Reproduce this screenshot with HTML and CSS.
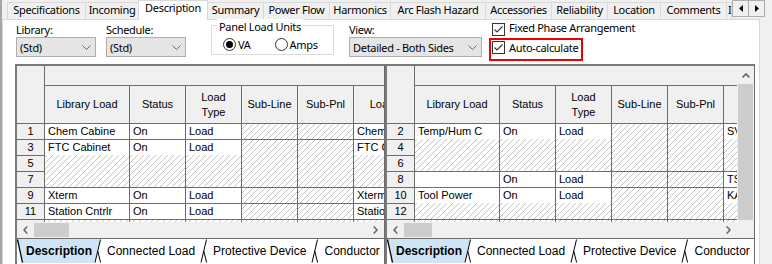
FILE: index.html
```html
<!DOCTYPE html>
<html>
<head>
<meta charset="utf-8">
<title>Panel Schedule</title>
<link rel="stylesheet" href="styles.css">
</head>
<body>
<div class="win">
  <div class="tabs">
    <div class="tab w-spec">Specifications</div>
    <div class="tab w-inc">Incoming</div>
    <div class="tab sel w-desc">Description</div>
    <div class="tab w-sum">Summary</div>
    <div class="tab w-pf">Power Flow</div>
    <div class="tab w-harm">Harmonics</div>
    <div class="tab w-arc">Arc Flash Hazard</div>
    <div class="tab w-acc">Accessories</div>
    <div class="tab w-rel">Reliability</div>
    <div class="tab w-loc">Location</div>
    <div class="tab w-com">Comments</div>
    <div class="tab w-part">Info</div>
    <div class="tab-arrows">
      <div class="arrow-btn"><svg width="4" height="7" viewBox="0 0 4 7"><polygon points="4,0 0,3.5 4,7" fill="#000"/></svg></div>
      <div class="arrow-btn"><svg width="4" height="7" viewBox="0 0 4 7"><polygon points="0,0 4,3.5 0,7" fill="#000"/></svg></div>
    </div>
  </div>
  <div class="panel">
    <div class="form">
      <div class="field f-lib">
        <div class="lbl">Library:</div>
        <div class="combo">(Std)<svg width="9" height="5" viewBox="0 0 9 5"><polyline points="0.5,0.5 4.5,4.5 8.5,0.5" fill="none" stroke="#666"/></svg></div>
      </div>
      <div class="field f-sch">
        <div class="lbl">Schedule:</div>
        <div class="combo">(Std)<svg width="9" height="5" viewBox="0 0 9 5"><polyline points="0.5,0.5 4.5,4.5 8.5,0.5" fill="none" stroke="#666"/></svg></div>
      </div>
      <div class="units">
        <div class="units-title">Panel Load Units</div>
        <div class="radios">
          <span class="radio on"></span><span class="rlbl va">VA</span>
          <span class="radio"></span><span class="rlbl">Amps</span>
        </div>
      </div>
      <div class="field f-view">
        <div class="lbl">View:</div>
        <div class="combo">Detailed - Both Sides<svg width="9" height="5" viewBox="0 0 9 5"><polyline points="0.5,0.5 4.5,4.5 8.5,0.5" fill="none" stroke="#666"/></svg></div>
      </div>
      <div class="checks">
        <div class="chk-row">
          <span class="chk"><svg width="11" height="11" viewBox="0 0 11 11"><polyline points="1.5,5.5 4,8 9.5,2.5" fill="none" stroke="#333" stroke-width="1.1"/></svg></span>
          <span class="chk-text">Fixed Phase Arrangement</span>
        </div>
        <div class="chk-row hl">
          <span class="chk"><svg width="11" height="11" viewBox="0 0 11 11"><polyline points="1.5,5.5 4,8 9.5,2.5" fill="none" stroke="#333" stroke-width="1.1"/></svg></span>
          <span class="chk-text">Auto-calculate</span>
        </div>
      </div>
    </div>

    <div class="grids">
      <!-- LEFT PANE -->
      <div class="pane">
        <div class="view">
          <div class="clip">
            <div class="sheet">
              <div class="corner"></div>
              <div class="grp"></div>
              <div class="hd">Library Load</div>
              <div class="hd">Status</div>
              <div class="hd">Load<br>Type</div>
              <div class="hd">Sub-Line</div>
              <div class="hd">Sub-Pnl</div>
              <div class="hd">Load ID</div>

              <div class="rh">1</div>
              <div class="c">Chem Cabine</div>
              <div class="c">On</div>
              <div class="c">Load</div>
              <div class="h"></div>
              <div class="h"></div>
              <div class="c">Chem Cabinet</div>

              <div class="rh">3</div>
              <div class="c m s3">FTC Cabinet</div>
              <div class="c m s3">On</div>
              <div class="c m s3">Load</div>
              <div class="h s3"></div>
              <div class="h s3"></div>
              <div class="c m s3">FTC Cabinet</div>
              <div class="rh">5</div>
              <div class="rh">7</div>

              <div class="rh">9</div>
              <div class="c">Xterm</div>
              <div class="c">On</div>
              <div class="c">Load</div>
              <div class="h"></div>
              <div class="h"></div>
              <div class="c">Xterm</div>

              <div class="rh">11</div>
              <div class="c">Station Cntrlr</div>
              <div class="c">On</div>
              <div class="c">Load</div>
              <div class="h"></div>
              <div class="h"></div>
              <div class="c">Station Cntrlr</div>

              <div class="rh">13</div>
              <div class="h"></div>
              <div class="h"></div>
              <div class="h"></div>
              <div class="h"></div>
              <div class="h"></div>
              <div class="h"></div>
            </div>
          </div>
        </div>
        <div class="hscroll">
          <div class="sb-btn"><svg width="5" height="8" viewBox="0 0 5 8"><polyline points="4.3,0.6 1,4 4.3,7.4" fill="none" stroke="#606060" stroke-width="1.5"/></svg></div>
          <div class="thumb-h thumb-l"></div>
          <div class="track"></div>
          <div class="sb-btn"><svg width="5" height="8" viewBox="0 0 5 8"><polyline points="0.7,0.6 4,4 0.7,7.4" fill="none" stroke="#606060" stroke-width="1.5"/></svg></div>
        </div>
        <div class="tabbar">
          <svg width="6" height="24" viewBox="0 0 6 24"><polygon points="0.5,0 6,0 6,24 5.5,24" fill="#cfe4f7"/><line x1="0.5" y1="0.5" x2="5.5" y2="23.5" stroke="#000" stroke-width="1.3"/></svg>
          <span class="stab sel">Description</span>
          <svg width="8" height="24" viewBox="0 0 8 24"><polygon points="0,0 6.5,0 1,24 0,24" fill="#cfe4f7"/><line x1="1" y1="23.5" x2="6.5" y2="0.5" stroke="#000"/><line x1="3.75" y1="12" x2="6.6" y2="23.5" stroke="#000"/></svg>
          <span class="stab">Connected Load</span>
          <svg width="8" height="24" viewBox="0 0 8 24"><line x1="1" y1="23.5" x2="6.5" y2="0.5" stroke="#000"/><line x1="3.75" y1="12" x2="6.6" y2="23.5" stroke="#000"/></svg>
          <span class="stab">Protective Device</span>
          <svg width="8" height="24" viewBox="0 0 8 24"><line x1="1" y1="23.5" x2="6.5" y2="0.5" stroke="#000"/><line x1="3.75" y1="12" x2="6.6" y2="23.5" stroke="#000"/></svg>
          <span class="stab">Conductor</span>
        </div>
      </div>

      <!-- RIGHT PANE -->
      <div class="pane">
        <div class="view">
          <div class="clip">
            <div class="sheet">
              <div class="corner"></div>
              <div class="grp"></div>
              <div class="hd">Library Load</div>
              <div class="hd">Status</div>
              <div class="hd">Load<br>Type</div>
              <div class="hd">Sub-Line</div>
              <div class="hd">Sub-Pnl</div>
              <div class="hd">Load ID</div>

              <div class="rh">2</div>
              <div class="c m s3">Temp/Hum C</div>
              <div class="c m s3">On</div>
              <div class="c m s3">Load</div>
              <div class="h s3"></div>
              <div class="h s3"></div>
              <div class="c m s3">SV-1</div>
              <div class="rh">4</div>
              <div class="rh">6</div>

              <div class="rh">8</div>
              <div class="c"></div>
              <div class="c">On</div>
              <div class="c">Load</div>
              <div class="h"></div>
              <div class="h"></div>
              <div class="c">TS-1</div>

              <div class="rh">10</div>
              <div class="c m s2">Tool Power</div>
              <div class="c m s2">On</div>
              <div class="c m s2">Load</div>
              <div class="h s2"></div>
              <div class="h s2"></div>
              <div class="c m s2">KA-1</div>
              <div class="rh">12</div>

              <div class="rh">14</div>
              <div class="h"></div>
              <div class="h"></div>
              <div class="h"></div>
              <div class="h"></div>
              <div class="h"></div>
              <div class="h"></div>
            </div>
          </div>
          <div class="vscroll">
            <div class="vs-btn"><svg width="8" height="5" viewBox="0 0 8 5"><polyline points="0.6,4.4 4,1 7.4,4.4" fill="none" stroke="#606060" stroke-width="1.5"/></svg></div>
            <div class="thumb-v"></div>
          </div>
        </div>
        <div class="hscroll">
          <div class="sb-btn"><svg width="5" height="8" viewBox="0 0 5 8"><polyline points="4.3,0.6 1,4 4.3,7.4" fill="none" stroke="#606060" stroke-width="1.5"/></svg></div>
          <div class="thumb-h thumb-r"></div>
          <div class="track"></div>
          <div class="sb-btn"><svg width="5" height="8" viewBox="0 0 5 8"><polyline points="0.7,0.6 4,4 0.7,7.4" fill="none" stroke="#606060" stroke-width="1.5"/></svg></div>
          <div class="sb-corner"></div>
        </div>
        <div class="tabbar">
          <svg width="6" height="24" viewBox="0 0 6 24"><polygon points="0.5,0 6,0 6,24 5.5,24" fill="#cfe4f7"/><line x1="0.5" y1="0.5" x2="5.5" y2="23.5" stroke="#000" stroke-width="1.3"/></svg>
          <span class="stab sel">Description</span>
          <svg width="8" height="24" viewBox="0 0 8 24"><polygon points="0,0 6.5,0 1,24 0,24" fill="#cfe4f7"/><line x1="1" y1="23.5" x2="6.5" y2="0.5" stroke="#000"/><line x1="3.75" y1="12" x2="6.6" y2="23.5" stroke="#000"/></svg>
          <span class="stab">Connected Load</span>
          <svg width="8" height="24" viewBox="0 0 8 24"><line x1="1" y1="23.5" x2="6.5" y2="0.5" stroke="#000"/><line x1="3.75" y1="12" x2="6.6" y2="23.5" stroke="#000"/></svg>
          <span class="stab">Protective Device</span>
          <svg width="8" height="24" viewBox="0 0 8 24"><line x1="1" y1="23.5" x2="6.5" y2="0.5" stroke="#000"/><line x1="3.75" y1="12" x2="6.6" y2="23.5" stroke="#000"/></svg>
          <span class="stab">Conductor</span>
        </div>
      </div>
    </div>
  </div>
</div>
</body>
</html>
```
FILE: styles.css
```css
* { box-sizing: border-box; margin: 0; padding: 0; }
html, body { width: 772px; height: 264px; overflow: hidden; }
body {
  background: #f0f0f0;
  font-family: "Noto Sans", "Liberation Sans", sans-serif;
  font-size: 11px;
  color: #000;
}

.win {
  height: 290px;
  border-left: 2px solid #a6a6a6;
  display: flex;
  flex-direction: column;
}

/* ---------- top tab strip ---------- */
.tabs {
  height: 19px;
  flex: none;
  display: flex;
  padding-left: 6px;
  position: relative;
  z-index: 2;
}
.tab {
  flex: none;
  height: 17px;
  margin-top: 2px;
  margin-left: -1px;
  border: 1px solid #d9d9d9;
  border-bottom: 0;
  background: #f0f0f0;
  display: flex;
  justify-content: center;
  line-height: 14px;
  letter-spacing: -0.3px;
  white-space: nowrap;
  overflow: hidden;
}
.tab.sel { height: 20px; margin-top: 0; background: #fff; }
.w-spec { width: 79px; }
.w-inc { width: 54px; }
.w-desc { width: 70px; }
.w-sum { width: 57px; }
.w-pf { width: 67px; }
.w-harm { width: 62px; }
.w-arc { width: 96px; }
.w-acc { width: 67px; }
.w-rel { width: 57px; }
.w-loc { width: 54px; }
.w-com { width: 67px; }
.w-part { width: 6px; justify-content: flex-start; padding-left: 1px; }

.tab-arrows { display: flex; height: 17px; margin-left: 0; }
.arrow-btn {
  width: 17px;
  height: 17px;
  border: 1px solid #adadad;
  background: #f0f0f0;
  display: flex;
  align-items: center;
  justify-content: center;
}
.arrow-btn + .arrow-btn { margin-left: -1px; }

/* ---------- panel ---------- */
.panel {
  flex: 1;
  background: #fff;
  border: 1px solid #d9d9d9;
  margin-right: 12px;
  display: flex;
  flex-direction: column;
  position: relative;
  z-index: 1;
}

.form {
  flex: none;
  height: 44px;
  padding: 2px 0 0 13px;
  display: flex;
}
.field { display: flex; flex-direction: column; flex: none; }
.lbl { height: 15px; line-height: 15px; letter-spacing: -0.3px; }
.combo {
  height: 20px;
  border: 1px solid #adadad;
  background: #e5e5e5;
  display: flex;
  align-items: center;
  padding-left: 3px;
  line-height: 15px;
  letter-spacing: -0.3px;
  white-space: nowrap;
}
.combo svg { margin-left: auto; margin-right: 4px; flex: none; }
.f-lib { width: 80px; }
.f-sch { width: 80px; margin-left: 10px; }
.f-view { width: 133px; margin-left: 15px; }

.units {
  flex: none;
  width: 123px;
  height: 30px;
  margin: 3px 0 0 25px;
  border: 1px solid #dcdcdc;
}
.units-title {
  margin: -7px 0 0 5px;
  padding: 0 2px;
  background: #fff;
  width: max-content;
  line-height: 15px;
  letter-spacing: -0.3px;
}
.radios {
  display: flex;
  align-items: center;
  height: 13px;
  margin-top: 4px;
  padding-left: 11px;
}
.radio {
  flex: none;
  width: 13px;
  height: 13px;
  border: 1px solid #333;
  border-radius: 50%;
  background: #fff;
  display: flex;
  align-items: center;
  justify-content: center;
}
.radio.on::after {
  content: "";
  width: 7px;
  height: 7px;
  border-radius: 50%;
  background: #000;
}
.rlbl { margin-left: 2px; line-height: 15px; letter-spacing: -0.3px; }
.rlbl.va { margin-right: 24px; }

.checks {
  flex: none;
  margin: -2px 0 0 7px;
  display: flex;
  flex-direction: column;
}
.chk-row { display: flex; height: 16px; padding-left: 3px; }
.chk {
  flex: none;
  width: 13px;
  height: 13px;
  margin-top: 3px;
  border: 1px solid #333;
  background: #fff;
}
.chk svg { display: block; }
.chk-text {
  margin-left: 4px;
  line-height: 15px;
  letter-spacing: -0.3px;
  white-space: nowrap;
}
.chk-row.hl {
  margin-top: 2px;
  width: 94px;
  height: 23px;
  border: 2px solid #ee0000;
  padding-left: 1px;
}
.chk-row.hl .chk { margin-top: 1px; }

/* ---------- grids ---------- */
.grids {
  flex: 1;
  min-height: 0;
  display: flex;
  margin-left: 12px;
}
.pane {
  flex: none;
  width: 370px;
  border-top: 2px solid #7a7a7a;
  border-left: 2px solid #7a7a7a;
  border-right: 1px solid #6a6a6a;
  display: flex;
  flex-direction: column;
  overflow: hidden;
}
.view { flex: none; height: 156px; display: flex; }
.clip { flex: 1; min-width: 0; overflow: hidden; }

.sheet {
  display: grid;
  grid-template-columns: 27px 84px 55px 55px 55px 55px 70px;
  grid-template-rows: 19px 37px repeat(7, 15px);
  gap: 1px;
  width: max-content;
  background: #6d6d6d;
  font-family: "Liberation Sans", Arial, sans-serif;
  font-size: 11px;
}
.corner { grid-row: span 2; background: #f0f0f0; }
.grp { grid-column: span 6; background: #f0f0f0; }
.hd {
  background: #f0f0f0;
  display: flex;
  align-items: center;
  justify-content: center;
  text-align: center;
  line-height: 15px;
  white-space: nowrap;
}
.rh { background: #f0f0f0; text-align: center; line-height: 15px; }
.c {
  background: #fff;
  line-height: 15px;
  padding-left: 3px;
  white-space: nowrap;
  overflow: hidden;
}
.h {
  background: repeating-linear-gradient(135deg, #fff 0 3.4px, #c4c4c4 3.4px 4.24px);
}
.c.m {
  background:
    linear-gradient(#fff, #fff) 0 0 / 100% 15px no-repeat,
    repeating-linear-gradient(135deg, #fff 0 3.4px, #c4c4c4 3.4px 4.24px);
}
.s2 { grid-row: span 2; }
.s3 { grid-row: span 3; }

/* scrollbars */
.hscroll { flex: none; height: 16px; display: flex; background: #f0f0f0; }
.sb-btn {
  flex: none;
  width: 17px;
  display: flex;
  align-items: center;
  justify-content: center;
}
.thumb-h { flex: none; background: #cdcdcd; margin: 1px 0; }
.thumb-l { width: 35px; }
.thumb-r { width: 28px; }
.track { flex: 1; }
.sb-corner { flex: none; width: 17px; background: #f0f0f0; }

.vscroll {
  flex: none;
  width: 17px;
  background: #f0f0f0;
  display: flex;
  flex-direction: column;
}
.vs-btn {
  height: 18px;
  display: flex;
  align-items: center;
  justify-content: center;
}
.thumb-v { height: 136px; margin: 0 1px; background: #cdcdcd; }

/* sheet tabs */
.tabbar {
  flex: none;
  height: 40px;
  border-top: 1px solid #6d6d6d;
  background: #fff;
  display: flex;
  align-items: flex-start;
  font-family: "Liberation Sans", Arial, sans-serif;
  font-size: 12px;
}
.tabbar svg { display: block; flex: none; }
.stab { line-height: 24px; padding: 0 5px; white-space: nowrap; }
.stab.sel { font-weight: bold; background: #cfe4f7; padding: 0 2px 0 3px; }
```
